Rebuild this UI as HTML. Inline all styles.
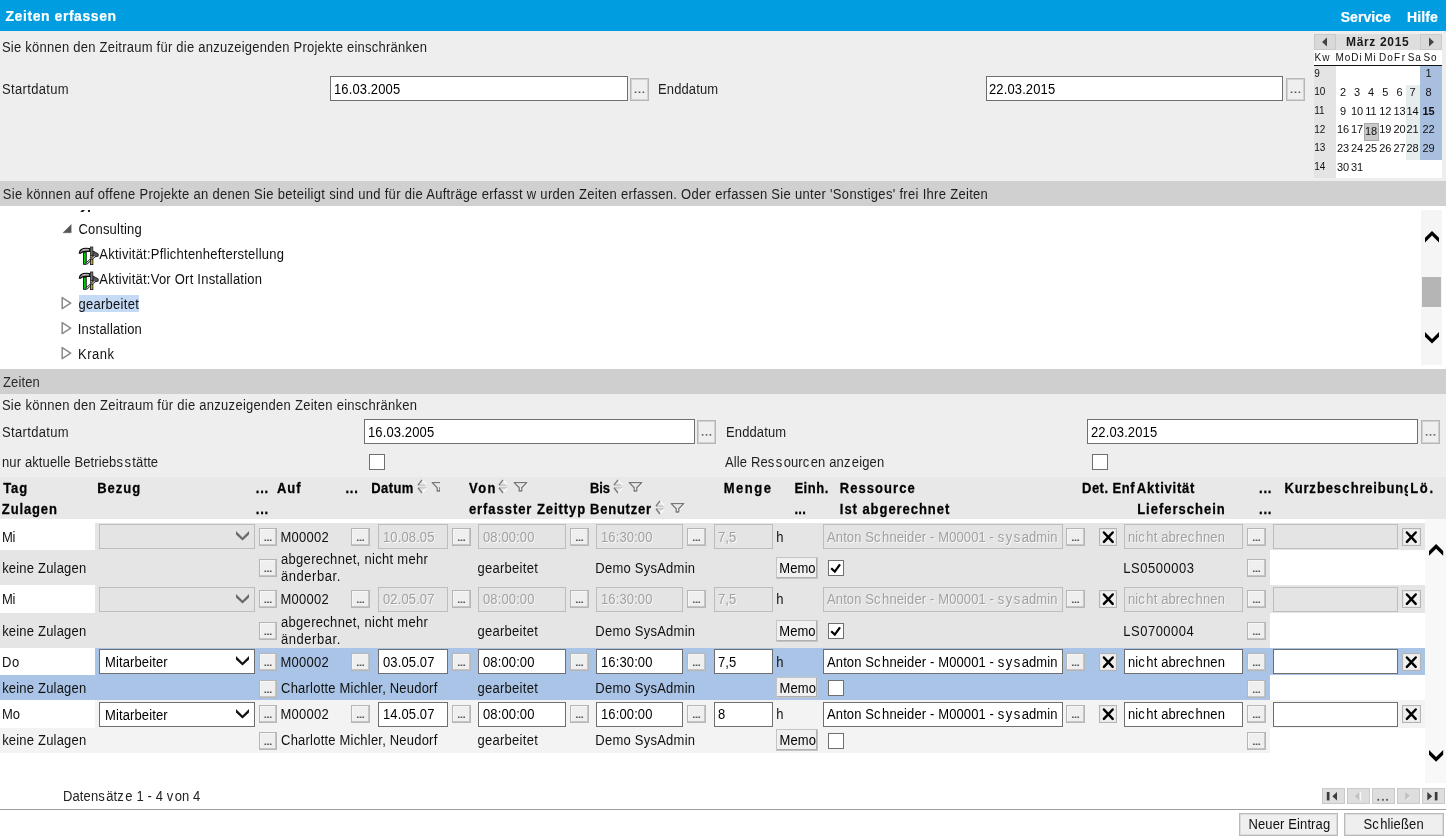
<!DOCTYPE html><html><head><meta charset="utf-8"><style>
html,body{margin:0;padding:0;}#root{position:absolute;left:0;top:0;width:1446px;height:838px;will-change:transform;}body{width:1446px;height:838px;position:relative;overflow:hidden;background:#fff;font-family:"Liberation Sans",sans-serif;}
.t{position:absolute;white-space:nowrap;}.b{position:absolute;box-sizing:border-box;}svg.b{overflow:visible;}
</style></head><body><div id="root">
<div class="b" style="left:0px;top:0px;width:1446px;height:31px;background:#009ee0;"></div>
<div class="t" style="left:5.5px;top:8.15px;font-size:14px;line-height:17px;color:#fff;font-weight:bold;letter-spacing:0.5607142857142853px;transform:scaleY(1.05);transform-origin:0 13.35px;-webkit-text-stroke:0.2px #fff;">Zeiten erfassen</div>
<div class="t" style="left:1340.7px;top:8.65px;font-size:14px;line-height:17px;color:#fff;font-weight:bold;letter-spacing:0.041666666666666664px;transform:scaleY(1.05);transform-origin:0 13.35px;-webkit-text-stroke:0.2px #fff;">Service</div>
<div class="t" style="left:1407.05px;top:8.65px;font-size:14px;line-height:17px;color:#fff;font-weight:bold;letter-spacing:0.07500000000000018px;transform:scaleY(1.05);transform-origin:0 13.35px;-webkit-text-stroke:0.2px #fff;">Hilfe</div>
<div class="b" style="left:0px;top:31px;width:1446px;height:150px;background:#eeeeee;"></div>
<div class="t" style="left:1.9px;top:40.00px;font-size:13px;line-height:16px;color:#1e1e1e;letter-spacing:0.24318181818181836px;transform:scaleY(1.08);transform-origin:0 12.50px;">Sie können den Zeitraum für die anzuzeigenden Projekte einschränken</div>
<div class="t" style="left:2.0px;top:81.50px;font-size:13px;line-height:16px;color:#1e1e1e;letter-spacing:0.3388888888888886px;transform:scaleY(1.08);transform-origin:0 12.50px;">Startdatum</div>
<div class="b" style="left:330px;top:76px;width:298px;height:25px;background:#fff;border:1px solid #6f6f6f;"></div>
<div class="t" style="left:334px;top:81.50px;font-size:13px;line-height:16px;color:#000;letter-spacing:0.12px;transform:scaleY(1.08);transform-origin:0 12.50px;">16.03.2005</div>
<div class="b" style="left:630px;top:78px;width:19px;height:23px;background:#efefef;border:1px solid #b6b6b6;box-shadow:inset 0 0 0 1px #d2d2d2;"></div>
<svg class="b" style="left:630px;top:78px;" width="19.0" height="23.0"><rect x="4.75" y="13.56" width="1.7" height="1.4" fill="#505050"/><rect x="8.65" y="13.56" width="1.7" height="1.4" fill="#505050"/><rect x="12.55" y="13.56" width="1.7" height="1.4" fill="#505050"/></svg>
<div class="t" style="left:658px;top:81.50px;font-size:13px;line-height:16px;color:#1e1e1e;letter-spacing:0.12px;transform:scaleY(1.08);transform-origin:0 12.50px;">Enddatum</div>
<div class="b" style="left:986px;top:76px;width:297px;height:25px;background:#fff;border:1px solid #6f6f6f;"></div>
<div class="t" style="left:989px;top:81.50px;font-size:13px;line-height:16px;color:#000;letter-spacing:0.12px;transform:scaleY(1.08);transform-origin:0 12.50px;">22.03.2015</div>
<div class="b" style="left:1286px;top:78px;width:19px;height:23px;background:#efefef;border:1px solid #b6b6b6;box-shadow:inset 0 0 0 1px #d2d2d2;"></div>
<svg class="b" style="left:1286px;top:78px;" width="19.0" height="23.0"><rect x="4.75" y="13.56" width="1.7" height="1.4" fill="#505050"/><rect x="8.65" y="13.56" width="1.7" height="1.4" fill="#505050"/><rect x="12.55" y="13.56" width="1.7" height="1.4" fill="#505050"/></svg>
<div class="b" style="left:1314px;top:34px;width:128px;height:16px;background:#dedede;"></div>
<div class="b" style="left:1314px;top:34px;width:22px;height:16px;background:#d9d9d9;border:1px solid #c9c9c9;"></div>
<div class="b" style="left:1420px;top:34px;width:22px;height:16px;background:#d9d9d9;border:1px solid #c9c9c9;"></div>
<svg class="b" style="left:1314px;top:34px;" width="22" height="16"><path d="M8 8 L13 3.6 L13 12.4 Z" fill="#444"/></svg>
<svg class="b" style="left:1420px;top:34px;" width="22" height="16"><path d="M14 8 L9 3.6 L9 12.4 Z" fill="#444"/></svg>
<div class="t" style="left:1346.05px;top:35.14px;font-size:12px;line-height:15px;color:#1a1a1a;font-weight:bold;letter-spacing:0.6624999999999996px;transform:scaleY(1.04);transform-origin:0 11.66px;">März 2015</div>
<div class="b" style="left:1314px;top:50px;width:128px;height:15px;background:#fff;"></div>
<div class="t" style="left:1314.6000000000001px;top:50.64px;font-size:10px;line-height:13px;color:#111;letter-spacing:0.9px;">Kw</div>
<div class="t" style="left:1335.5px;top:50.64px;font-size:10px;line-height:13px;color:#111;letter-spacing:0.9px;">Mo</div>
<div class="t" style="left:1351.3000000000002px;top:50.64px;font-size:10px;line-height:13px;color:#111;letter-spacing:0.9px;">Di</div>
<div class="t" style="left:1364.2px;top:50.64px;font-size:10px;line-height:13px;color:#111;letter-spacing:0.9px;">Mi</div>
<div class="t" style="left:1379.1000000000001px;top:50.64px;font-size:10px;line-height:13px;color:#111;letter-spacing:0.9px;">Do</div>
<div class="t" style="left:1393.9px;top:50.64px;font-size:10px;line-height:13px;color:#111;letter-spacing:0.9px;">F</div>
<div class="t" style="left:1401.7px;top:50.64px;font-size:10px;line-height:13px;color:#111;letter-spacing:0.9px;">r</div>
<div class="t" style="left:1407.8000000000002px;top:50.64px;font-size:10px;line-height:13px;color:#111;letter-spacing:0.9px;">Sa</div>
<div class="t" style="left:1423.5px;top:50.64px;font-size:10px;line-height:13px;color:#111;letter-spacing:0.9px;">So</div>
<div class="b" style="left:1314px;top:65px;width:128px;height:1px;background:#111;"></div>
<div class="b" style="left:1314px;top:66px;width:128px;height:112px;background:#fff;"></div>
<div class="b" style="left:1314px;top:66px;width:22px;height:112px;background:#e4e4e4;"></div>
<div class="b" style="left:1406px;top:85px;width:14px;height:75px;background:#e5eded;"></div>
<div class="b" style="left:1420px;top:66px;width:22px;height:94px;background:#a9bfdf;"></div>
<div class="b" style="left:1364px;top:123px;width:15px;height:18px;background:#c9c9c9;border:1px solid #a9a9a9;"></div>
<div class="t" style="left:1314.3px;top:66.63px;font-size:10px;line-height:13px;color:#111;">9</div>
<div class="t" style="left:1314.3px;top:85.03px;font-size:10px;line-height:13px;color:#111;">10</div>
<div class="t" style="left:1314.3px;top:103.83px;font-size:10px;line-height:13px;color:#111;">11</div>
<div class="t" style="left:1314.3px;top:122.64px;font-size:10px;line-height:13px;color:#111;">12</div>
<div class="t" style="left:1314.3px;top:141.44px;font-size:10px;line-height:13px;color:#111;">13</div>
<div class="t" style="left:1314.3px;top:159.84px;font-size:10px;line-height:13px;color:#111;">14</div>
<div class="t" style="left:1408.5px;top:66.30px;width:40px;text-align:center;font-size:11px;line-height:14px;color:#111;">1</div>
<div class="t" style="left:1323px;top:84.70px;width:40px;text-align:center;font-size:11px;line-height:14px;color:#111;">2</div>
<div class="t" style="left:1337px;top:84.70px;width:40px;text-align:center;font-size:11px;line-height:14px;color:#111;">3</div>
<div class="t" style="left:1351px;top:84.70px;width:40px;text-align:center;font-size:11px;line-height:14px;color:#111;">4</div>
<div class="t" style="left:1365.3px;top:84.70px;width:40px;text-align:center;font-size:11px;line-height:14px;color:#111;">5</div>
<div class="t" style="left:1379.5px;top:84.70px;width:40px;text-align:center;font-size:11px;line-height:14px;color:#111;">6</div>
<div class="t" style="left:1392.5px;top:84.70px;width:40px;text-align:center;font-size:11px;line-height:14px;color:#111;">7</div>
<div class="t" style="left:1408.5px;top:84.70px;width:40px;text-align:center;font-size:11px;line-height:14px;color:#111;">8</div>
<div class="t" style="left:1323px;top:103.50px;width:40px;text-align:center;font-size:11px;line-height:14px;color:#111;">9</div>
<div class="t" style="left:1337px;top:103.50px;width:40px;text-align:center;font-size:11px;line-height:14px;color:#111;">10</div>
<div class="t" style="left:1351px;top:103.50px;width:40px;text-align:center;font-size:11px;line-height:14px;color:#111;">11</div>
<div class="t" style="left:1365.3px;top:103.50px;width:40px;text-align:center;font-size:11px;line-height:14px;color:#111;">12</div>
<div class="t" style="left:1379.5px;top:103.50px;width:40px;text-align:center;font-size:11px;line-height:14px;color:#111;">13</div>
<div class="t" style="left:1392.5px;top:103.50px;width:40px;text-align:center;font-size:11px;line-height:14px;color:#111;">14</div>
<div class="t" style="left:1408.5px;top:103.50px;width:40px;text-align:center;font-size:11px;line-height:14px;color:#111;font-weight:bold;">15</div>
<div class="t" style="left:1323px;top:122.30px;width:40px;text-align:center;font-size:11px;line-height:14px;color:#111;">16</div>
<div class="t" style="left:1337px;top:122.30px;width:40px;text-align:center;font-size:11px;line-height:14px;color:#111;">17</div>
<div class="t" style="left:1351px;top:123.50px;width:40px;text-align:center;font-size:11px;line-height:14px;color:#111;">18</div>
<div class="t" style="left:1365.3px;top:122.30px;width:40px;text-align:center;font-size:11px;line-height:14px;color:#111;">19</div>
<div class="t" style="left:1379.5px;top:122.30px;width:40px;text-align:center;font-size:11px;line-height:14px;color:#111;">20</div>
<div class="t" style="left:1392.5px;top:122.30px;width:40px;text-align:center;font-size:11px;line-height:14px;color:#111;">21</div>
<div class="t" style="left:1408.5px;top:122.30px;width:40px;text-align:center;font-size:11px;line-height:14px;color:#111;">22</div>
<div class="t" style="left:1323px;top:141.10px;width:40px;text-align:center;font-size:11px;line-height:14px;color:#111;">23</div>
<div class="t" style="left:1337px;top:141.10px;width:40px;text-align:center;font-size:11px;line-height:14px;color:#111;">24</div>
<div class="t" style="left:1351px;top:141.10px;width:40px;text-align:center;font-size:11px;line-height:14px;color:#111;">25</div>
<div class="t" style="left:1365.3px;top:141.10px;width:40px;text-align:center;font-size:11px;line-height:14px;color:#111;">26</div>
<div class="t" style="left:1379.5px;top:141.10px;width:40px;text-align:center;font-size:11px;line-height:14px;color:#111;">27</div>
<div class="t" style="left:1392.5px;top:141.10px;width:40px;text-align:center;font-size:11px;line-height:14px;color:#111;">28</div>
<div class="t" style="left:1408.5px;top:141.10px;width:40px;text-align:center;font-size:11px;line-height:14px;color:#111;">29</div>
<div class="t" style="left:1323px;top:159.50px;width:40px;text-align:center;font-size:11px;line-height:14px;color:#111;">30</div>
<div class="t" style="left:1337px;top:159.50px;width:40px;text-align:center;font-size:11px;line-height:14px;color:#111;">31</div>
<div class="b" style="left:0px;top:181px;width:1446px;height:25px;background:#d0d0d0;"></div>
<div class="t" style="left:2.8px;top:186.50px;font-size:13px;line-height:16px;color:#1e1e1e;letter-spacing:0.30640243902439024px;transform:scaleY(1.08);transform-origin:0 12.50px;">Sie können auf offene Projekte an denen Sie beteiligt sind und für die Aufträge erfasst w urden Zeiten erfassen. Oder erfassen Sie unter &#x27;Sonstiges&#x27; frei Ihre Zeiten</div>
<div class="b" style="left:0px;top:206px;width:1446px;height:163px;background:#fff;"></div>
<div class="b" style="left:80.5px;top:209.6px;width:3px;height:2.2px;background:#222;transform:skewX(-40deg);"></div>
<div class="b" style="left:87.8px;top:209.8px;width:1.8px;height:2.2px;background:#222;"></div>
<svg class="b" style="left:62px;top:224px;" width="10" height="10"><path d="M1.0 8.8 L9.2 8.8 L9.2 0.5 Z" fill="#555" stroke="#555" stroke-width="0.4"/></svg>
<div class="t" style="left:78.4px;top:221.50px;font-size:13px;line-height:16px;color:#111;letter-spacing:0.21666666666666698px;transform:scaleY(1.08);transform-origin:0 12.50px;">Consulting</div>
<svg class="b" style="left:77.8px;top:246px;" width="22" height="20" viewBox="0 0 22 20"><path d="M1.3 7.0 C1.8 4.0 4.6 2.4 8.2 2.4 L11.8 2.6 L11.8 5.4 L8.4 5.3 C5.8 5.3 3.6 5.8 2.1 7.4 Z" fill="#9a9a9a" stroke="#0a0a0a" stroke-width="1.2" stroke-linejoin="round"/><path d="M4.4 4.0 C6 3.3 8.2 3.2 10.6 3.4" stroke="#d8d8d8" stroke-width="0.8" fill="none"/><rect x="5.6" y="6.2" width="2.6" height="12.1" fill="#00e000" stroke="#1a1020" stroke-width="1.0"/><path d="M15.0 5.0 L20.2 7.8 L20.2 10.2 L15.2 11.0 Z" fill="#5a5a5a" stroke="#111" stroke-width="0.8" stroke-linejoin="round"/><rect x="12.4" y="1.0" width="2.4" height="8.6" fill="#707070" stroke="#222" stroke-width="0.8"/><rect x="12.4" y="9.6" width="2.4" height="2.2" fill="#a8a800" stroke="#222" stroke-width="0.6"/><path d="M8.4 17.6 L17.2 9.6" stroke="#303040" stroke-width="2.4"/><path d="M8.7 17.3 L16.9 9.9" stroke="#e8e8f4" stroke-width="1.0"/><rect x="12.5" y="13.2" width="2.4" height="5.4" fill="#b8b800" stroke="#111" stroke-width="0.8"/></svg>
<div class="t" style="left:99.3px;top:246.50px;font-size:13px;line-height:16px;color:#111;letter-spacing:0.23906250000000018px;transform:scaleY(1.08);transform-origin:0 12.50px;">Aktivität:Pflichtenhefterstellung</div>
<svg class="b" style="left:77.8px;top:271px;" width="22" height="20" viewBox="0 0 22 20"><path d="M1.3 7.0 C1.8 4.0 4.6 2.4 8.2 2.4 L11.8 2.6 L11.8 5.4 L8.4 5.3 C5.8 5.3 3.6 5.8 2.1 7.4 Z" fill="#9a9a9a" stroke="#0a0a0a" stroke-width="1.2" stroke-linejoin="round"/><path d="M4.4 4.0 C6 3.3 8.2 3.2 10.6 3.4" stroke="#d8d8d8" stroke-width="0.8" fill="none"/><rect x="5.6" y="6.2" width="2.6" height="12.1" fill="#00e000" stroke="#1a1020" stroke-width="1.0"/><path d="M15.0 5.0 L20.2 7.8 L20.2 10.2 L15.2 11.0 Z" fill="#5a5a5a" stroke="#111" stroke-width="0.8" stroke-linejoin="round"/><rect x="12.4" y="1.0" width="2.4" height="8.6" fill="#707070" stroke="#222" stroke-width="0.8"/><rect x="12.4" y="9.6" width="2.4" height="2.2" fill="#a8a800" stroke="#222" stroke-width="0.6"/><path d="M8.4 17.6 L17.2 9.6" stroke="#303040" stroke-width="2.4"/><path d="M8.7 17.3 L16.9 9.9" stroke="#e8e8f4" stroke-width="1.0"/><rect x="12.5" y="13.2" width="2.4" height="5.4" fill="#b8b800" stroke="#111" stroke-width="0.8"/></svg>
<div class="t" style="left:99.3px;top:271.50px;font-size:13px;line-height:16px;color:#111;letter-spacing:0.22931034482758642px;transform:scaleY(1.08);transform-origin:0 12.50px;">Aktivität:Vor Ort Installation</div>
<svg class="b" style="left:61px;top:297.3px;" width="11" height="13"><path d="M1.2 0.6 L9.7 6.2 L1.2 11.7 Z" fill="none" stroke="#8a8a8a" stroke-width="1.5" stroke-linejoin="round"/></svg>
<div class="b" style="left:79px;top:295px;width:60px;height:17px;background:#c5daf5;"></div>
<div class="t" style="left:78.5px;top:296.50px;font-size:13px;line-height:16px;color:#111;letter-spacing:0.27222222222222253px;transform:scaleY(1.08);transform-origin:0 12.50px;">gearbeitet</div>
<svg class="b" style="left:61px;top:322.3px;" width="11" height="13"><path d="M1.2 0.6 L9.7 6.2 L1.2 11.7 Z" fill="none" stroke="#8a8a8a" stroke-width="1.5" stroke-linejoin="round"/></svg>
<div class="t" style="left:77.75px;top:321.50px;font-size:13px;line-height:16px;color:#111;letter-spacing:0.17727272727272753px;transform:scaleY(1.08);transform-origin:0 12.50px;">Installation</div>
<svg class="b" style="left:61px;top:347.3px;" width="11" height="13"><path d="M1.2 0.6 L9.7 6.2 L1.2 11.7 Z" fill="none" stroke="#8a8a8a" stroke-width="1.5" stroke-linejoin="round"/></svg>
<div class="t" style="left:78.0px;top:346.50px;font-size:13px;line-height:16px;color:#111;letter-spacing:0.5px;transform:scaleY(1.08);transform-origin:0 12.50px;">Krank</div>
<div class="b" style="left:1421px;top:210px;width:21px;height:155px;background:#f5f5f5;"></div>
<div class="b" style="left:1422px;top:277px;width:19px;height:30px;background:#b5b5b5;"></div>
<svg class="b" style="left:1425px;top:231px;" width="15.0" height="12.5"><path d="M0 11.50 L7.00 4.50 L14.00 11.50 L14.00 6.80 L7.00 0 L0 6.80 Z" fill="#000"/></svg>
<svg class="b" style="left:1425px;top:332px;" width="15.0" height="12.5"><path d="M0 0 L7.00 7.00 L14.00 0 L14.00 4.70 L7.00 11.50 L0 4.70 Z" fill="#000"/></svg>
<div class="b" style="left:0px;top:369px;width:1446px;height:25px;background:#cfcfcf;"></div>
<div class="t" style="left:3px;top:374.50px;font-size:13px;line-height:16px;color:#2a2a2a;letter-spacing:0.12px;transform:scaleY(1.08);transform-origin:0 12.50px;">Zeiten</div>
<div class="b" style="left:0px;top:394px;width:1446px;height:83px;background:#eeeeee;"></div>
<div class="t" style="left:1.9px;top:397.50px;font-size:13px;line-height:16px;color:#1e1e1e;letter-spacing:0.27578124999999964px;transform:scaleY(1.08);transform-origin:0 12.50px;">Sie können den Zeitraum für die anzuzeigenden Zeiten einschränken</div>
<div class="t" style="left:2.0px;top:424.50px;font-size:13px;line-height:16px;color:#1e1e1e;letter-spacing:0.3388888888888886px;transform:scaleY(1.08);transform-origin:0 12.50px;">Startdatum</div>
<div class="b" style="left:364px;top:419px;width:331px;height:25px;background:#fff;border:1px solid #6f6f6f;"></div>
<div class="t" style="left:368px;top:424.50px;font-size:13px;line-height:16px;color:#000;letter-spacing:0.12px;transform:scaleY(1.08);transform-origin:0 12.50px;">16.03.2005</div>
<div class="b" style="left:697px;top:420px;width:19px;height:24px;background:#efefef;border:1px solid #b6b6b6;box-shadow:inset 0 0 0 1px #d2d2d2;"></div>
<svg class="b" style="left:697px;top:420px;" width="19.0" height="24.0"><rect x="4.75" y="14.18" width="1.7" height="1.4" fill="#505050"/><rect x="8.65" y="14.18" width="1.7" height="1.4" fill="#505050"/><rect x="12.55" y="14.18" width="1.7" height="1.4" fill="#505050"/></svg>
<div class="t" style="left:726px;top:424.50px;font-size:13px;line-height:16px;color:#1e1e1e;letter-spacing:0.12px;transform:scaleY(1.08);transform-origin:0 12.50px;">Enddatum</div>
<div class="b" style="left:1087px;top:419px;width:331px;height:25px;background:#fff;border:1px solid #6f6f6f;"></div>
<div class="t" style="left:1091px;top:424.50px;font-size:13px;line-height:16px;color:#000;letter-spacing:0.12px;transform:scaleY(1.08);transform-origin:0 12.50px;">22.03.2015</div>
<div class="b" style="left:1421px;top:420px;width:19px;height:24px;background:#efefef;border:1px solid #b6b6b6;box-shadow:inset 0 0 0 1px #d2d2d2;"></div>
<svg class="b" style="left:1421px;top:420px;" width="19.0" height="24.0"><rect x="4.75" y="14.18" width="1.7" height="1.4" fill="#505050"/><rect x="8.65" y="14.18" width="1.7" height="1.4" fill="#505050"/><rect x="12.55" y="14.18" width="1.7" height="1.4" fill="#505050"/></svg>
<div class="t" style="left:2px;top:454.50px;font-size:13px;line-height:16px;color:#1e1e1e;letter-spacing:0.12px;transform:scaleY(1.08);transform-origin:0 12.50px;">nur aktuelle Betrieb<span style="letter-spacing:1.45px">s</span><span style="letter-spacing:1.45px">s</span>tätte</div>
<div class="b" style="left:369px;top:454px;width:16px;height:16px;background:#fff;border:1px solid #6f6f6f;"></div>
<div class="t" style="left:725px;top:454.50px;font-size:13px;line-height:16px;color:#1e1e1e;letter-spacing:0.12px;transform:scaleY(1.08);transform-origin:0 12.50px;">Alle Re<span style="letter-spacing:1.45px">s</span><span style="letter-spacing:1.45px">s</span>our<span style="letter-spacing:1.45px">c</span>en an<span style="letter-spacing:1.45px">z</span>eigen</div>
<div class="b" style="left:1092px;top:454px;width:16px;height:16px;background:#fff;border:1px solid #6f6f6f;"></div>
<div class="b" style="left:0px;top:477px;width:1446px;height:42px;background:#e8e8e8;"></div>
<div class="t" style="left:3.3px;top:480.50px;font-size:13px;line-height:16px;color:#000;font-weight:bold;letter-spacing:0.8499999999999996px;transform:scaleY(1.08);transform-origin:0 12.50px;-webkit-text-stroke:0.25px #000;">Tag</div>
<div class="t" style="left:97.15px;top:480.50px;font-size:13px;line-height:16px;color:#000;font-weight:bold;letter-spacing:1.0px;transform:scaleY(1.08);transform-origin:0 12.50px;-webkit-text-stroke:0.25px #000;">Bezug</div>
<div class="t" style="left:255.85000000000002px;top:480.50px;font-size:13px;line-height:16px;color:#000;font-weight:bold;letter-spacing:0.7750000000000004px;transform:scaleY(1.08);transform-origin:0 12.50px;-webkit-text-stroke:0.25px #000;">...</div>
<div class="t" style="left:277.05px;top:480.50px;font-size:13px;line-height:16px;color:#000;font-weight:bold;letter-spacing:0.9000000000000004px;transform:scaleY(1.08);transform-origin:0 12.50px;-webkit-text-stroke:0.25px #000;">Auf</div>
<div class="t" style="left:345.45px;top:480.50px;font-size:13px;line-height:16px;color:#000;font-weight:bold;letter-spacing:0.7750000000000004px;transform:scaleY(1.08);transform-origin:0 12.50px;-webkit-text-stroke:0.25px #000;">...</div>
<div class="t" style="left:371.25px;top:480.50px;font-size:13px;line-height:16px;color:#000;font-weight:bold;letter-spacing:0.40000000000000036px;transform:scaleY(1.08);transform-origin:0 12.50px;-webkit-text-stroke:0.25px #000;">Datum</div>
<div class="t" style="left:469.1px;top:480.50px;font-size:13px;line-height:16px;color:#000;font-weight:bold;letter-spacing:1.4000000000000004px;transform:scaleY(1.08);transform-origin:0 12.50px;-webkit-text-stroke:0.25px #000;">Von</div>
<div class="t" style="left:590.05px;top:480.50px;font-size:13px;line-height:16px;color:#000;font-weight:bold;letter-spacing:-0.1999999999999993px;transform:scaleY(1.08);transform-origin:0 12.50px;-webkit-text-stroke:0.25px #000;">Bis</div>
<div class="t" style="left:723.75px;top:480.50px;font-size:13px;line-height:16px;color:#000;font-weight:bold;letter-spacing:1.5px;transform:scaleY(1.08);transform-origin:0 12.50px;-webkit-text-stroke:0.25px #000;">Menge</div>
<div class="t" style="left:794.45px;top:480.50px;font-size:13px;line-height:16px;color:#000;font-weight:bold;letter-spacing:0.5124999999999993px;transform:scaleY(1.08);transform-origin:0 12.50px;-webkit-text-stroke:0.25px #000;">Einh.</div>
<div class="t" style="left:839.85px;top:480.50px;font-size:13px;line-height:16px;color:#000;font-weight:bold;letter-spacing:1.0437499999999993px;transform:scaleY(1.08);transform-origin:0 12.50px;-webkit-text-stroke:0.25px #000;">Ressource</div>
<div class="t" style="left:1082.05px;top:480.50px;font-size:13px;line-height:16px;color:#000;font-weight:bold;letter-spacing:0.47142857142857103px;transform:scaleY(1.08);transform-origin:0 12.50px;-webkit-text-stroke:0.25px #000;">Det. Enf</div>
<div class="t" style="left:1136.85px;top:480.50px;font-size:13px;line-height:16px;color:#000;font-weight:bold;letter-spacing:0.7874999999999996px;transform:scaleY(1.08);transform-origin:0 12.50px;-webkit-text-stroke:0.25px #000;">Aktivität</div>
<div class="t" style="left:1259.05px;top:480.50px;font-size:13px;line-height:16px;color:#000;font-weight:bold;letter-spacing:0.7750000000000004px;transform:scaleY(1.08);transform-origin:0 12.50px;-webkit-text-stroke:0.25px #000;">...</div>
<div class="t" style="left:1410.25px;top:480.50px;font-size:13px;line-height:16px;color:#000;font-weight:bold;letter-spacing:1.6500000000000004px;transform:scaleY(1.08);transform-origin:0 12.50px;-webkit-text-stroke:0.25px #000;">Lö.</div>
<div class="t" style="left:1284.5px;top:480.50px;font-size:13px;line-height:16px;color:#000;font-weight:bold;letter-spacing:0.8px;width:123px;overflow:hidden;transform:scaleY(1.08);transform-origin:0 12.50px;-webkit-text-stroke:0.25px #000;">Kur<span style="letter-spacing:1.20px">z</span>be<span style="letter-spacing:1.20px">s</span><span style="letter-spacing:1.20px">c</span>hreibung</div>
<div class="t" style="left:1.85px;top:501.50px;font-size:13px;line-height:16px;color:#000;font-weight:bold;letter-spacing:0.8666666666666671px;transform:scaleY(1.08);transform-origin:0 12.50px;-webkit-text-stroke:0.25px #000;">Zulagen</div>
<div class="t" style="left:255.85000000000002px;top:501.50px;font-size:13px;line-height:16px;color:#000;font-weight:bold;letter-spacing:0.7750000000000004px;transform:scaleY(1.08);transform-origin:0 12.50px;-webkit-text-stroke:0.25px #000;">...</div>
<div class="t" style="left:468.9px;top:501.50px;font-size:13px;line-height:16px;color:#000;font-weight:bold;letter-spacing:0.9468750000000004px;transform:scaleY(1.08);transform-origin:0 12.50px;-webkit-text-stroke:0.25px #000;">erfasster Zeittyp</div>
<div class="t" style="left:590.05px;top:501.50px;font-size:13px;line-height:16px;color:#000;font-weight:bold;letter-spacing:0.7642857142857145px;transform:scaleY(1.08);transform-origin:0 12.50px;-webkit-text-stroke:0.25px #000;">Benutzer</div>
<div class="t" style="left:794.45px;top:501.50px;font-size:13px;line-height:16px;color:#000;font-weight:bold;letter-spacing:0.3250000000000002px;transform:scaleY(1.08);transform-origin:0 12.50px;-webkit-text-stroke:0.25px #000;">...</div>
<div class="t" style="left:839.85px;top:501.50px;font-size:13px;line-height:16px;color:#000;font-weight:bold;letter-spacing:0.9535714285714282px;transform:scaleY(1.08);transform-origin:0 12.50px;-webkit-text-stroke:0.25px #000;">Ist abgerechnet</div>
<div class="t" style="left:1137.15px;top:501.50px;font-size:13px;line-height:16px;color:#000;font-weight:bold;letter-spacing:1.0045454545454542px;transform:scaleY(1.08);transform-origin:0 12.50px;-webkit-text-stroke:0.25px #000;">Lieferschein</div>
<div class="t" style="left:1259.05px;top:501.50px;font-size:13px;line-height:16px;color:#000;font-weight:bold;letter-spacing:0.7750000000000004px;transform:scaleY(1.08);transform-origin:0 12.50px;-webkit-text-stroke:0.25px #000;">...</div>
<svg class="b" style="left:416.5px;top:479px;" width="11" height="15" viewBox="0 0 11 15"><path d="M5 0.6 L0.8 6.3 L9.6 6.3 Z" fill="#e9e9e9"/><path d="M1.2 6.1 L9.4 6.1" stroke="#c2c2c2" stroke-width="1.3"/><path d="M5.2 0.8 L9.4 6.1" stroke="#fdfdfd" stroke-width="1.2"/><path d="M5 0.8 L1 6.2" stroke="#7a7a7a" stroke-width="1.4"/><path d="M0.8 8.6 L9.6 8.6 L5 14.2 Z" fill="#e9e9e9"/><path d="M1.2 8.9 L9.4 8.9" stroke="#bdbdbd" stroke-width="1.2"/><path d="M9.4 8.9 L5.2 14" stroke="#fdfdfd" stroke-width="1.2"/><path d="M1 8.8 L5 14" stroke="#7a7a7a" stroke-width="1.4"/></svg>
<svg class="b" style="left:431px;top:481px;overflow:hidden;" width="8.8" height="12" viewBox="0 0 8.8 12"><path d="M1.2 1.6 L13.8 1.6 L8.8 6.8 L8.8 10 L6.2 10 L6.2 6.8 Z" fill="none" stroke="#fafafa" stroke-width="1.2" transform="translate(0.7,0.7)"/><path d="M1.2 1.6 L13.8 1.6 L8.8 6.8 L8.8 10 L6.2 10 L6.2 6.8 Z" fill="none" stroke="#777" stroke-width="1.3" stroke-linejoin="round"/></svg>
<svg class="b" style="left:498px;top:479px;" width="11" height="15" viewBox="0 0 11 15"><path d="M5 0.6 L0.8 6.3 L9.6 6.3 Z" fill="#e9e9e9"/><path d="M1.2 6.1 L9.4 6.1" stroke="#c2c2c2" stroke-width="1.3"/><path d="M5.2 0.8 L9.4 6.1" stroke="#fdfdfd" stroke-width="1.2"/><path d="M5 0.8 L1 6.2" stroke="#7a7a7a" stroke-width="1.4"/><path d="M0.8 8.6 L9.6 8.6 L5 14.2 Z" fill="#e9e9e9"/><path d="M1.2 8.9 L9.4 8.9" stroke="#bdbdbd" stroke-width="1.2"/><path d="M9.4 8.9 L5.2 14" stroke="#fdfdfd" stroke-width="1.2"/><path d="M1 8.8 L5 14" stroke="#7a7a7a" stroke-width="1.4"/></svg>
<svg class="b" style="left:513px;top:481px;overflow:hidden;" width="15" height="12" viewBox="0 0 15 12"><path d="M1.2 1.6 L13.8 1.6 L8.8 6.8 L8.8 10 L6.2 10 L6.2 6.8 Z" fill="none" stroke="#fafafa" stroke-width="1.2" transform="translate(0.7,0.7)"/><path d="M1.2 1.6 L13.8 1.6 L8.8 6.8 L8.8 10 L6.2 10 L6.2 6.8 Z" fill="none" stroke="#777" stroke-width="1.3" stroke-linejoin="round"/></svg>
<svg class="b" style="left:613px;top:479px;" width="11" height="15" viewBox="0 0 11 15"><path d="M5 0.6 L0.8 6.3 L9.6 6.3 Z" fill="#e9e9e9"/><path d="M1.2 6.1 L9.4 6.1" stroke="#c2c2c2" stroke-width="1.3"/><path d="M5.2 0.8 L9.4 6.1" stroke="#fdfdfd" stroke-width="1.2"/><path d="M5 0.8 L1 6.2" stroke="#7a7a7a" stroke-width="1.4"/><path d="M0.8 8.6 L9.6 8.6 L5 14.2 Z" fill="#e9e9e9"/><path d="M1.2 8.9 L9.4 8.9" stroke="#bdbdbd" stroke-width="1.2"/><path d="M9.4 8.9 L5.2 14" stroke="#fdfdfd" stroke-width="1.2"/><path d="M1 8.8 L5 14" stroke="#7a7a7a" stroke-width="1.4"/></svg>
<svg class="b" style="left:628px;top:481px;overflow:hidden;" width="15" height="12" viewBox="0 0 15 12"><path d="M1.2 1.6 L13.8 1.6 L8.8 6.8 L8.8 10 L6.2 10 L6.2 6.8 Z" fill="none" stroke="#fafafa" stroke-width="1.2" transform="translate(0.7,0.7)"/><path d="M1.2 1.6 L13.8 1.6 L8.8 6.8 L8.8 10 L6.2 10 L6.2 6.8 Z" fill="none" stroke="#777" stroke-width="1.3" stroke-linejoin="round"/></svg>
<svg class="b" style="left:655px;top:500px;" width="11" height="15" viewBox="0 0 11 15"><path d="M5 0.6 L0.8 6.3 L9.6 6.3 Z" fill="#e9e9e9"/><path d="M1.2 6.1 L9.4 6.1" stroke="#c2c2c2" stroke-width="1.3"/><path d="M5.2 0.8 L9.4 6.1" stroke="#fdfdfd" stroke-width="1.2"/><path d="M5 0.8 L1 6.2" stroke="#7a7a7a" stroke-width="1.4"/><path d="M0.8 8.6 L9.6 8.6 L5 14.2 Z" fill="#e9e9e9"/><path d="M1.2 8.9 L9.4 8.9" stroke="#bdbdbd" stroke-width="1.2"/><path d="M9.4 8.9 L5.2 14" stroke="#fdfdfd" stroke-width="1.2"/><path d="M1 8.8 L5 14" stroke="#7a7a7a" stroke-width="1.4"/></svg>
<svg class="b" style="left:670px;top:502px;overflow:hidden;" width="15" height="12" viewBox="0 0 15 12"><path d="M1.2 1.6 L13.8 1.6 L8.8 6.8 L8.8 10 L6.2 10 L6.2 6.8 Z" fill="none" stroke="#fafafa" stroke-width="1.2" transform="translate(0.7,0.7)"/><path d="M1.2 1.6 L13.8 1.6 L8.8 6.8 L8.8 10 L6.2 10 L6.2 6.8 Z" fill="none" stroke="#777" stroke-width="1.3" stroke-linejoin="round"/></svg>
<div class="b" style="left:1425px;top:519px;width:21px;height:264px;background:#f8f8f8;"></div>
<svg class="b" style="left:1428.7px;top:544px;" width="15.2" height="12.8"><path d="M0 11.80 L7.10 4.70 L14.20 11.80 L14.20 7.10 L7.10 0 L0 7.10 Z" fill="#000"/></svg>
<svg class="b" style="left:1428.6px;top:750.2px;" width="15.2" height="12.8"><path d="M0 0 L7.10 7.10 L14.20 0 L14.20 4.70 L7.10 11.80 L0 4.70 Z" fill="#000"/></svg>
<div class="b" style="left:95px;top:523px;width:1330px;height:27px;background:#e5e5e5;"></div>
<div class="b" style="left:0px;top:550px;width:1270px;height:35px;background:#e5e5e5;"></div>
<div class="t" style="left:1.9px;top:529.50px;font-size:13px;line-height:16px;color:#111;letter-spacing:-0.15000000000000036px;transform:scaleY(1.08);transform-origin:0 12.50px;">Mi</div>
<div class="b" style="left:99px;top:524px;width:156px;height:24.5px;background:#e4e4e4;border:1px solid #bdbdbd;"></div>
<svg class="b" style="left:236.2px;top:531px;" width="14.0" height="10.4"><path d="M0 0 L6.50 6.50 L13.00 0 L13.00 3.40 L6.50 9.40 L0 3.40 Z" fill="#6a6a6a"/></svg>
<div class="b" style="left:259px;top:528px;width:18px;height:18px;background:#efefef;border:1px solid #b6b6b6;box-shadow:inset -1px -1px 0 #c6c6c6, inset 1px 1px 0 #f6f6f6;"></div>
<svg class="b" style="left:259px;top:528px;" width="18.0" height="18.0"><rect x="5.45" y="11.54" width="1.7" height="1.4" fill="#505050"/><rect x="8.15" y="11.54" width="1.7" height="1.4" fill="#505050"/><rect x="10.85" y="11.54" width="1.7" height="1.4" fill="#505050"/></svg>
<div class="t" style="left:280.5px;top:529.50px;font-size:13px;line-height:16px;color:#111;letter-spacing:0.25999999999999945px;transform:scaleY(1.08);transform-origin:0 12.50px;">M00002</div>
<div class="b" style="left:351px;top:528px;width:19px;height:18px;background:#efefef;border:1px solid #b6b6b6;box-shadow:inset -1px -1px 0 #c6c6c6, inset 1px 1px 0 #f6f6f6;"></div>
<svg class="b" style="left:351px;top:528px;" width="19.0" height="18.0"><rect x="5.95" y="11.54" width="1.7" height="1.4" fill="#505050"/><rect x="8.65" y="11.54" width="1.7" height="1.4" fill="#505050"/><rect x="11.35" y="11.54" width="1.7" height="1.4" fill="#505050"/></svg>
<div class="b" style="left:378px;top:524px;width:70px;height:24.5px;background:#e4e4e4;border:1px solid #bdbdbd;"></div>
<div class="t" style="left:383px;top:529.50px;font-size:13px;line-height:16px;color:#a0a0a0;letter-spacing:0.12px;transform:scaleY(1.08);transform-origin:0 12.50px;text-shadow:0.8px 0.8px 0 #fbfbfb;">10.08.05</div>
<div class="b" style="left:452px;top:528px;width:19px;height:18px;background:#efefef;border:1px solid #b6b6b6;box-shadow:inset -1px -1px 0 #c6c6c6, inset 1px 1px 0 #f6f6f6;"></div>
<svg class="b" style="left:452px;top:528px;" width="19.0" height="18.0"><rect x="5.95" y="11.54" width="1.7" height="1.4" fill="#505050"/><rect x="8.65" y="11.54" width="1.7" height="1.4" fill="#505050"/><rect x="11.35" y="11.54" width="1.7" height="1.4" fill="#505050"/></svg>
<div class="b" style="left:478px;top:524px;width:88px;height:24.5px;background:#e4e4e4;border:1px solid #bdbdbd;"></div>
<div class="t" style="left:483px;top:529.50px;font-size:13px;line-height:16px;color:#a0a0a0;letter-spacing:0.12px;transform:scaleY(1.08);transform-origin:0 12.50px;text-shadow:0.8px 0.8px 0 #fbfbfb;">08:00:00</div>
<div class="b" style="left:570px;top:528px;width:19px;height:18px;background:#efefef;border:1px solid #b6b6b6;box-shadow:inset -1px -1px 0 #c6c6c6, inset 1px 1px 0 #f6f6f6;"></div>
<svg class="b" style="left:570px;top:528px;" width="19.0" height="18.0"><rect x="5.95" y="11.54" width="1.7" height="1.4" fill="#505050"/><rect x="8.65" y="11.54" width="1.7" height="1.4" fill="#505050"/><rect x="11.35" y="11.54" width="1.7" height="1.4" fill="#505050"/></svg>
<div class="b" style="left:596px;top:524px;width:87px;height:24.5px;background:#e4e4e4;border:1px solid #bdbdbd;"></div>
<div class="t" style="left:601px;top:529.50px;font-size:13px;line-height:16px;color:#a0a0a0;letter-spacing:0.12px;transform:scaleY(1.08);transform-origin:0 12.50px;text-shadow:0.8px 0.8px 0 #fbfbfb;">16:30:00</div>
<div class="b" style="left:687px;top:528px;width:19px;height:18px;background:#efefef;border:1px solid #b6b6b6;box-shadow:inset -1px -1px 0 #c6c6c6, inset 1px 1px 0 #f6f6f6;"></div>
<svg class="b" style="left:687px;top:528px;" width="19.0" height="18.0"><rect x="5.95" y="11.54" width="1.7" height="1.4" fill="#505050"/><rect x="8.65" y="11.54" width="1.7" height="1.4" fill="#505050"/><rect x="11.35" y="11.54" width="1.7" height="1.4" fill="#505050"/></svg>
<div class="b" style="left:714px;top:524px;width:59px;height:24.5px;background:#e4e4e4;border:1px solid #bdbdbd;"></div>
<div class="t" style="left:718px;top:529.50px;font-size:13px;line-height:16px;color:#a0a0a0;letter-spacing:0.12px;transform:scaleY(1.08);transform-origin:0 12.50px;text-shadow:0.8px 0.8px 0 #fbfbfb;">7,5</div>
<div class="t" style="left:776.2px;top:529.50px;font-size:13px;line-height:16px;color:#111;letter-spacing:0.12px;transform:scaleY(1.08);transform-origin:0 12.50px;">h</div>
<div class="b" style="left:823px;top:524px;width:240px;height:24.5px;background:#e4e4e4;border:1px solid #bdbdbd;"></div>
<div class="t" style="left:827px;top:529.50px;font-size:13px;line-height:16px;color:#a0a0a0;letter-spacing:0.12px;transform:scaleY(1.08);transform-origin:0 12.50px;text-shadow:0.8px 0.8px 0 #fbfbfb;">Anton S<span style="letter-spacing:1.45px">c</span>hneider - M00001 - <span style="letter-spacing:1.45px">s</span><span style="letter-spacing:1.45px">y</span><span style="letter-spacing:1.45px">s</span>admin</div>
<div class="b" style="left:1066px;top:528px;width:19px;height:18px;background:#efefef;border:1px solid #b6b6b6;box-shadow:inset -1px -1px 0 #c6c6c6, inset 1px 1px 0 #f6f6f6;"></div>
<svg class="b" style="left:1066px;top:528px;" width="19.0" height="18.0"><rect x="5.95" y="11.54" width="1.7" height="1.4" fill="#505050"/><rect x="8.65" y="11.54" width="1.7" height="1.4" fill="#505050"/><rect x="11.35" y="11.54" width="1.7" height="1.4" fill="#505050"/></svg>
<div class="b" style="left:1099px;top:527.5px;width:18px;height:18.5px;background:#f0f0f0;border:1px solid #b4b4b4;box-shadow:inset 0 0 0 1px #e8e8e8;"></div>
<svg class="b" style="left:1099px;top:527.5px;" width="18" height="18.5" viewBox="0 0 18 18.5"><path d="M4.9 4.5 L13.7 13.8 M13.7 4.5 L4.9 13.8" stroke="#000" stroke-width="2.5" stroke-linecap="round"/></svg>
<div class="b" style="left:1124px;top:524px;width:119px;height:24.5px;background:#e4e4e4;border:1px solid #bdbdbd;"></div>
<div class="t" style="left:1128px;top:529.50px;font-size:13px;line-height:16px;color:#a0a0a0;letter-spacing:0.12px;transform:scaleY(1.08);transform-origin:0 12.50px;text-shadow:0.8px 0.8px 0 #fbfbfb;">ni<span style="letter-spacing:1.45px">c</span>ht abre<span style="letter-spacing:1.45px">c</span>hnen</div>
<div class="b" style="left:1247px;top:528px;width:19px;height:18px;background:#efefef;border:1px solid #b6b6b6;box-shadow:inset -1px -1px 0 #c6c6c6, inset 1px 1px 0 #f6f6f6;"></div>
<svg class="b" style="left:1247px;top:528px;" width="19.0" height="18.0"><rect x="5.95" y="11.54" width="1.7" height="1.4" fill="#505050"/><rect x="8.65" y="11.54" width="1.7" height="1.4" fill="#505050"/><rect x="11.35" y="11.54" width="1.7" height="1.4" fill="#505050"/></svg>
<div class="b" style="left:1273px;top:524px;width:125px;height:24.5px;background:#e4e4e4;border:1px solid #bdbdbd;"></div>
<div class="b" style="left:1402px;top:527.5px;width:19px;height:18.5px;background:#f0f0f0;border:1px solid #b4b4b4;box-shadow:inset 0 0 0 1px #e8e8e8;"></div>
<svg class="b" style="left:1402px;top:527.5px;" width="19" height="18.5" viewBox="0 0 19 18.5"><path d="M4.9 4.5 L13.7 13.8 M13.7 4.5 L4.9 13.8" stroke="#000" stroke-width="2.5" stroke-linecap="round"/></svg>
<div class="t" style="left:2.15px;top:561.00px;font-size:13px;line-height:16px;color:#111;letter-spacing:0.19583333333333286px;transform:scaleY(1.08);transform-origin:0 12.50px;">keine Zulagen</div>
<div class="b" style="left:259px;top:559px;width:18px;height:18px;background:#efefef;border:1px solid #b6b6b6;box-shadow:inset -1px -1px 0 #c6c6c6, inset 1px 1px 0 #f6f6f6;"></div>
<svg class="b" style="left:259px;top:559px;" width="18.0" height="18.0"><rect x="5.45" y="11.54" width="1.7" height="1.4" fill="#505050"/><rect x="8.15" y="11.54" width="1.7" height="1.4" fill="#505050"/><rect x="10.85" y="11.54" width="1.7" height="1.4" fill="#505050"/></svg>
<div class="t" style="left:281.0px;top:551.50px;font-size:13px;line-height:16px;color:#111;letter-spacing:0.3022727272727275px;transform:scaleY(1.08);transform-origin:0 12.50px;">abgerechnet, nicht mehr</div>
<div class="t" style="left:281.0px;top:568.80px;font-size:13px;line-height:16px;color:#111;letter-spacing:0.5437500000000002px;transform:scaleY(1.08);transform-origin:0 12.50px;">änderbar.</div>
<div class="t" style="left:477.5px;top:561.00px;font-size:13px;line-height:16px;color:#111;letter-spacing:0.27222222222222253px;transform:scaleY(1.08);transform-origin:0 12.50px;">gearbeitet</div>
<div class="t" style="left:595.3px;top:561.00px;font-size:13px;line-height:16px;color:#111;letter-spacing:0.24166666666666714px;transform:scaleY(1.08);transform-origin:0 12.50px;">Demo SysAdmin</div>
<div class="b" style="left:776px;top:557px;width:42px;height:21.5px;background:#f0f0f0;border:1px solid #c4c4c4;box-shadow:inset -1px -1px 0 #b0b0b0;"></div>
<div class="t" style="left:779.3px;top:560.50px;font-size:13px;line-height:16px;color:#000;letter-spacing:0.049999999999999524px;transform:scaleY(1.08);transform-origin:0 12.50px;">Memo</div>
<div class="b" style="left:828px;top:560px;width:16px;height:16px;background:#fff;border:1px solid #6f6f6f;"></div>
<svg class="b" style="left:828px;top:560px;" width="16" height="16" viewBox="0 0 16 16"><polyline points="3.2,8.2 6.8,11.6 12.0,4.3" fill="none" stroke="#000" stroke-width="2.2"/></svg>
<div class="t" style="left:1123.3px;top:561.00px;font-size:13px;line-height:16px;color:#111;letter-spacing:0.5250000000000004px;transform:scaleY(1.08);transform-origin:0 12.50px;">LS0500003</div>
<div class="b" style="left:1247px;top:559px;width:19px;height:18px;background:#efefef;border:1px solid #b6b6b6;box-shadow:inset -1px -1px 0 #c6c6c6, inset 1px 1px 0 #f6f6f6;"></div>
<svg class="b" style="left:1247px;top:559px;" width="19.0" height="18.0"><rect x="5.95" y="11.54" width="1.7" height="1.4" fill="#505050"/><rect x="8.65" y="11.54" width="1.7" height="1.4" fill="#505050"/><rect x="11.35" y="11.54" width="1.7" height="1.4" fill="#505050"/></svg>
<div class="b" style="left:95px;top:585px;width:1330px;height:28px;background:#e5e5e5;"></div>
<div class="b" style="left:0px;top:613px;width:1270px;height:35px;background:#e5e5e5;"></div>
<div class="t" style="left:1.9px;top:591.90px;font-size:13px;line-height:16px;color:#111;letter-spacing:-0.15000000000000036px;transform:scaleY(1.08);transform-origin:0 12.50px;">Mi</div>
<div class="b" style="left:99px;top:587px;width:156px;height:24.5px;background:#e4e4e4;border:1px solid #bdbdbd;"></div>
<svg class="b" style="left:236.2px;top:594px;" width="14.0" height="10.4"><path d="M0 0 L6.50 6.50 L13.00 0 L13.00 3.40 L6.50 9.40 L0 3.40 Z" fill="#6a6a6a"/></svg>
<div class="b" style="left:259px;top:590px;width:18px;height:18px;background:#efefef;border:1px solid #b6b6b6;box-shadow:inset -1px -1px 0 #c6c6c6, inset 1px 1px 0 #f6f6f6;"></div>
<svg class="b" style="left:259px;top:590px;" width="18.0" height="18.0"><rect x="5.45" y="11.54" width="1.7" height="1.4" fill="#505050"/><rect x="8.15" y="11.54" width="1.7" height="1.4" fill="#505050"/><rect x="10.85" y="11.54" width="1.7" height="1.4" fill="#505050"/></svg>
<div class="t" style="left:280.5px;top:591.90px;font-size:13px;line-height:16px;color:#111;letter-spacing:0.25999999999999945px;transform:scaleY(1.08);transform-origin:0 12.50px;">M00002</div>
<div class="b" style="left:351px;top:590px;width:19px;height:18px;background:#efefef;border:1px solid #b6b6b6;box-shadow:inset -1px -1px 0 #c6c6c6, inset 1px 1px 0 #f6f6f6;"></div>
<svg class="b" style="left:351px;top:590px;" width="19.0" height="18.0"><rect x="5.95" y="11.54" width="1.7" height="1.4" fill="#505050"/><rect x="8.65" y="11.54" width="1.7" height="1.4" fill="#505050"/><rect x="11.35" y="11.54" width="1.7" height="1.4" fill="#505050"/></svg>
<div class="b" style="left:378px;top:587px;width:70px;height:24.5px;background:#e4e4e4;border:1px solid #bdbdbd;"></div>
<div class="t" style="left:383px;top:591.90px;font-size:13px;line-height:16px;color:#a0a0a0;letter-spacing:0.12px;transform:scaleY(1.08);transform-origin:0 12.50px;text-shadow:0.8px 0.8px 0 #fbfbfb;">02.05.07</div>
<div class="b" style="left:452px;top:590px;width:19px;height:18px;background:#efefef;border:1px solid #b6b6b6;box-shadow:inset -1px -1px 0 #c6c6c6, inset 1px 1px 0 #f6f6f6;"></div>
<svg class="b" style="left:452px;top:590px;" width="19.0" height="18.0"><rect x="5.95" y="11.54" width="1.7" height="1.4" fill="#505050"/><rect x="8.65" y="11.54" width="1.7" height="1.4" fill="#505050"/><rect x="11.35" y="11.54" width="1.7" height="1.4" fill="#505050"/></svg>
<div class="b" style="left:478px;top:587px;width:88px;height:24.5px;background:#e4e4e4;border:1px solid #bdbdbd;"></div>
<div class="t" style="left:483px;top:591.90px;font-size:13px;line-height:16px;color:#a0a0a0;letter-spacing:0.12px;transform:scaleY(1.08);transform-origin:0 12.50px;text-shadow:0.8px 0.8px 0 #fbfbfb;">08:00:00</div>
<div class="b" style="left:570px;top:590px;width:19px;height:18px;background:#efefef;border:1px solid #b6b6b6;box-shadow:inset -1px -1px 0 #c6c6c6, inset 1px 1px 0 #f6f6f6;"></div>
<svg class="b" style="left:570px;top:590px;" width="19.0" height="18.0"><rect x="5.95" y="11.54" width="1.7" height="1.4" fill="#505050"/><rect x="8.65" y="11.54" width="1.7" height="1.4" fill="#505050"/><rect x="11.35" y="11.54" width="1.7" height="1.4" fill="#505050"/></svg>
<div class="b" style="left:596px;top:587px;width:87px;height:24.5px;background:#e4e4e4;border:1px solid #bdbdbd;"></div>
<div class="t" style="left:601px;top:591.90px;font-size:13px;line-height:16px;color:#a0a0a0;letter-spacing:0.12px;transform:scaleY(1.08);transform-origin:0 12.50px;text-shadow:0.8px 0.8px 0 #fbfbfb;">16:30:00</div>
<div class="b" style="left:687px;top:590px;width:19px;height:18px;background:#efefef;border:1px solid #b6b6b6;box-shadow:inset -1px -1px 0 #c6c6c6, inset 1px 1px 0 #f6f6f6;"></div>
<svg class="b" style="left:687px;top:590px;" width="19.0" height="18.0"><rect x="5.95" y="11.54" width="1.7" height="1.4" fill="#505050"/><rect x="8.65" y="11.54" width="1.7" height="1.4" fill="#505050"/><rect x="11.35" y="11.54" width="1.7" height="1.4" fill="#505050"/></svg>
<div class="b" style="left:714px;top:587px;width:59px;height:24.5px;background:#e4e4e4;border:1px solid #bdbdbd;"></div>
<div class="t" style="left:718px;top:591.90px;font-size:13px;line-height:16px;color:#a0a0a0;letter-spacing:0.12px;transform:scaleY(1.08);transform-origin:0 12.50px;text-shadow:0.8px 0.8px 0 #fbfbfb;">7,5</div>
<div class="t" style="left:776.2px;top:591.90px;font-size:13px;line-height:16px;color:#111;letter-spacing:0.12px;transform:scaleY(1.08);transform-origin:0 12.50px;">h</div>
<div class="b" style="left:823px;top:587px;width:240px;height:24.5px;background:#e4e4e4;border:1px solid #bdbdbd;"></div>
<div class="t" style="left:827px;top:591.90px;font-size:13px;line-height:16px;color:#a0a0a0;letter-spacing:0.12px;transform:scaleY(1.08);transform-origin:0 12.50px;text-shadow:0.8px 0.8px 0 #fbfbfb;">Anton S<span style="letter-spacing:1.45px">c</span>hneider - M00001 - <span style="letter-spacing:1.45px">s</span><span style="letter-spacing:1.45px">y</span><span style="letter-spacing:1.45px">s</span>admin</div>
<div class="b" style="left:1066px;top:590px;width:19px;height:18px;background:#efefef;border:1px solid #b6b6b6;box-shadow:inset -1px -1px 0 #c6c6c6, inset 1px 1px 0 #f6f6f6;"></div>
<svg class="b" style="left:1066px;top:590px;" width="19.0" height="18.0"><rect x="5.95" y="11.54" width="1.7" height="1.4" fill="#505050"/><rect x="8.65" y="11.54" width="1.7" height="1.4" fill="#505050"/><rect x="11.35" y="11.54" width="1.7" height="1.4" fill="#505050"/></svg>
<div class="b" style="left:1099px;top:589.5px;width:18px;height:18.5px;background:#f0f0f0;border:1px solid #b4b4b4;box-shadow:inset 0 0 0 1px #e8e8e8;"></div>
<svg class="b" style="left:1099px;top:589.5px;" width="18" height="18.5" viewBox="0 0 18 18.5"><path d="M4.9 4.5 L13.7 13.8 M13.7 4.5 L4.9 13.8" stroke="#000" stroke-width="2.5" stroke-linecap="round"/></svg>
<div class="b" style="left:1124px;top:587px;width:119px;height:24.5px;background:#e4e4e4;border:1px solid #bdbdbd;"></div>
<div class="t" style="left:1128px;top:591.90px;font-size:13px;line-height:16px;color:#a0a0a0;letter-spacing:0.12px;transform:scaleY(1.08);transform-origin:0 12.50px;text-shadow:0.8px 0.8px 0 #fbfbfb;">ni<span style="letter-spacing:1.45px">c</span>ht abre<span style="letter-spacing:1.45px">c</span>hnen</div>
<div class="b" style="left:1247px;top:590px;width:19px;height:18px;background:#efefef;border:1px solid #b6b6b6;box-shadow:inset -1px -1px 0 #c6c6c6, inset 1px 1px 0 #f6f6f6;"></div>
<svg class="b" style="left:1247px;top:590px;" width="19.0" height="18.0"><rect x="5.95" y="11.54" width="1.7" height="1.4" fill="#505050"/><rect x="8.65" y="11.54" width="1.7" height="1.4" fill="#505050"/><rect x="11.35" y="11.54" width="1.7" height="1.4" fill="#505050"/></svg>
<div class="b" style="left:1273px;top:587px;width:125px;height:24.5px;background:#e4e4e4;border:1px solid #bdbdbd;"></div>
<div class="b" style="left:1402px;top:589.5px;width:19px;height:18.5px;background:#f0f0f0;border:1px solid #b4b4b4;box-shadow:inset 0 0 0 1px #e8e8e8;"></div>
<svg class="b" style="left:1402px;top:589.5px;" width="19" height="18.5" viewBox="0 0 19 18.5"><path d="M4.9 4.5 L13.7 13.8 M13.7 4.5 L4.9 13.8" stroke="#000" stroke-width="2.5" stroke-linecap="round"/></svg>
<div class="t" style="left:2.15px;top:623.50px;font-size:13px;line-height:16px;color:#111;letter-spacing:0.19583333333333286px;transform:scaleY(1.08);transform-origin:0 12.50px;">keine Zulagen</div>
<div class="b" style="left:259px;top:622px;width:18px;height:18px;background:#efefef;border:1px solid #b6b6b6;box-shadow:inset -1px -1px 0 #c6c6c6, inset 1px 1px 0 #f6f6f6;"></div>
<svg class="b" style="left:259px;top:622px;" width="18.0" height="18.0"><rect x="5.45" y="11.54" width="1.7" height="1.4" fill="#505050"/><rect x="8.15" y="11.54" width="1.7" height="1.4" fill="#505050"/><rect x="10.85" y="11.54" width="1.7" height="1.4" fill="#505050"/></svg>
<div class="t" style="left:281.0px;top:614.50px;font-size:13px;line-height:16px;color:#111;letter-spacing:0.3022727272727275px;transform:scaleY(1.08);transform-origin:0 12.50px;">abgerechnet, nicht mehr</div>
<div class="t" style="left:281.0px;top:631.80px;font-size:13px;line-height:16px;color:#111;letter-spacing:0.5437500000000002px;transform:scaleY(1.08);transform-origin:0 12.50px;">änderbar.</div>
<div class="t" style="left:477.5px;top:623.50px;font-size:13px;line-height:16px;color:#111;letter-spacing:0.27222222222222253px;transform:scaleY(1.08);transform-origin:0 12.50px;">gearbeitet</div>
<div class="t" style="left:595.3px;top:623.50px;font-size:13px;line-height:16px;color:#111;letter-spacing:0.24166666666666714px;transform:scaleY(1.08);transform-origin:0 12.50px;">Demo SysAdmin</div>
<div class="b" style="left:776px;top:620px;width:42px;height:21.5px;background:#f0f0f0;border:1px solid #c4c4c4;box-shadow:inset -1px -1px 0 #b0b0b0;"></div>
<div class="t" style="left:779.3px;top:623.50px;font-size:13px;line-height:16px;color:#000;letter-spacing:0.049999999999999524px;transform:scaleY(1.08);transform-origin:0 12.50px;">Memo</div>
<div class="b" style="left:828px;top:623px;width:16px;height:16px;background:#fff;border:1px solid #6f6f6f;"></div>
<svg class="b" style="left:828px;top:623px;" width="16" height="16" viewBox="0 0 16 16"><polyline points="3.2,8.2 6.8,11.6 12.0,4.3" fill="none" stroke="#000" stroke-width="2.2"/></svg>
<div class="t" style="left:1123.3px;top:623.50px;font-size:13px;line-height:16px;color:#111;letter-spacing:0.49375000000000036px;transform:scaleY(1.08);transform-origin:0 12.50px;">LS0700004</div>
<div class="b" style="left:1247px;top:622px;width:19px;height:18px;background:#efefef;border:1px solid #b6b6b6;box-shadow:inset -1px -1px 0 #c6c6c6, inset 1px 1px 0 #f6f6f6;"></div>
<svg class="b" style="left:1247px;top:622px;" width="19.0" height="18.0"><rect x="5.95" y="11.54" width="1.7" height="1.4" fill="#505050"/><rect x="8.65" y="11.54" width="1.7" height="1.4" fill="#505050"/><rect x="11.35" y="11.54" width="1.7" height="1.4" fill="#505050"/></svg>
<div class="b" style="left:95px;top:648px;width:1330px;height:27px;background:#a9c4e6;"></div>
<div class="b" style="left:0px;top:675px;width:1270px;height:25px;background:#a9c4e6;"></div>
<div class="t" style="left:1.9px;top:654.50px;font-size:13px;line-height:16px;color:#111;letter-spacing:0.6500000000000004px;transform:scaleY(1.08);transform-origin:0 12.50px;">Do</div>
<div class="b" style="left:99px;top:649px;width:156px;height:24.5px;background:#fff;border:1px solid #6f6f6f;"></div>
<svg class="b" style="left:236.2px;top:656px;" width="14.0" height="10.4"><path d="M0 0 L6.50 6.50 L13.00 0 L13.00 3.40 L6.50 9.40 L0 3.40 Z" fill="#111"/></svg>
<div class="t" style="left:105px;top:654.50px;font-size:13px;line-height:16px;color:#000;letter-spacing:0.12px;transform:scaleY(1.08);transform-origin:0 12.50px;">Mitarbeiter</div>
<div class="b" style="left:259px;top:653px;width:18px;height:18px;background:#efefef;border:1px solid #b6b6b6;box-shadow:inset -1px -1px 0 #c6c6c6, inset 1px 1px 0 #f6f6f6;"></div>
<svg class="b" style="left:259px;top:653px;" width="18.0" height="18.0"><rect x="5.45" y="11.54" width="1.7" height="1.4" fill="#505050"/><rect x="8.15" y="11.54" width="1.7" height="1.4" fill="#505050"/><rect x="10.85" y="11.54" width="1.7" height="1.4" fill="#505050"/></svg>
<div class="t" style="left:280.5px;top:654.50px;font-size:13px;line-height:16px;color:#111;letter-spacing:0.25999999999999945px;transform:scaleY(1.08);transform-origin:0 12.50px;">M00002</div>
<div class="b" style="left:351px;top:653px;width:19px;height:18px;background:#efefef;border:1px solid #b6b6b6;box-shadow:inset -1px -1px 0 #c6c6c6, inset 1px 1px 0 #f6f6f6;"></div>
<svg class="b" style="left:351px;top:653px;" width="19.0" height="18.0"><rect x="5.95" y="11.54" width="1.7" height="1.4" fill="#505050"/><rect x="8.65" y="11.54" width="1.7" height="1.4" fill="#505050"/><rect x="11.35" y="11.54" width="1.7" height="1.4" fill="#505050"/></svg>
<div class="b" style="left:378px;top:649px;width:70px;height:24.5px;background:#fff;border:1px solid #6f6f6f;"></div>
<div class="t" style="left:383px;top:654.50px;font-size:13px;line-height:16px;color:#000;letter-spacing:0.12px;transform:scaleY(1.08);transform-origin:0 12.50px;">03.05.07</div>
<div class="b" style="left:452px;top:653px;width:19px;height:18px;background:#efefef;border:1px solid #b6b6b6;box-shadow:inset -1px -1px 0 #c6c6c6, inset 1px 1px 0 #f6f6f6;"></div>
<svg class="b" style="left:452px;top:653px;" width="19.0" height="18.0"><rect x="5.95" y="11.54" width="1.7" height="1.4" fill="#505050"/><rect x="8.65" y="11.54" width="1.7" height="1.4" fill="#505050"/><rect x="11.35" y="11.54" width="1.7" height="1.4" fill="#505050"/></svg>
<div class="b" style="left:478px;top:649px;width:88px;height:24.5px;background:#fff;border:1px solid #6f6f6f;"></div>
<div class="t" style="left:483px;top:654.50px;font-size:13px;line-height:16px;color:#000;letter-spacing:0.12px;transform:scaleY(1.08);transform-origin:0 12.50px;">08:00:00</div>
<div class="b" style="left:570px;top:653px;width:19px;height:18px;background:#efefef;border:1px solid #b6b6b6;box-shadow:inset -1px -1px 0 #c6c6c6, inset 1px 1px 0 #f6f6f6;"></div>
<svg class="b" style="left:570px;top:653px;" width="19.0" height="18.0"><rect x="5.95" y="11.54" width="1.7" height="1.4" fill="#505050"/><rect x="8.65" y="11.54" width="1.7" height="1.4" fill="#505050"/><rect x="11.35" y="11.54" width="1.7" height="1.4" fill="#505050"/></svg>
<div class="b" style="left:596px;top:649px;width:87px;height:24.5px;background:#fff;border:1px solid #6f6f6f;"></div>
<div class="t" style="left:601px;top:654.50px;font-size:13px;line-height:16px;color:#000;letter-spacing:0.12px;transform:scaleY(1.08);transform-origin:0 12.50px;">16:30:00</div>
<div class="b" style="left:687px;top:653px;width:19px;height:18px;background:#efefef;border:1px solid #b6b6b6;box-shadow:inset -1px -1px 0 #c6c6c6, inset 1px 1px 0 #f6f6f6;"></div>
<svg class="b" style="left:687px;top:653px;" width="19.0" height="18.0"><rect x="5.95" y="11.54" width="1.7" height="1.4" fill="#505050"/><rect x="8.65" y="11.54" width="1.7" height="1.4" fill="#505050"/><rect x="11.35" y="11.54" width="1.7" height="1.4" fill="#505050"/></svg>
<div class="b" style="left:714px;top:649px;width:59px;height:24.5px;background:#fff;border:1px solid #6f6f6f;"></div>
<div class="t" style="left:718px;top:654.50px;font-size:13px;line-height:16px;color:#000;letter-spacing:0.12px;transform:scaleY(1.08);transform-origin:0 12.50px;">7,5</div>
<div class="t" style="left:776.2px;top:654.50px;font-size:13px;line-height:16px;color:#111;letter-spacing:0.12px;transform:scaleY(1.08);transform-origin:0 12.50px;">h</div>
<div class="b" style="left:823px;top:649px;width:240px;height:24.5px;background:#fff;border:1px solid #6f6f6f;"></div>
<div class="t" style="left:827px;top:654.50px;font-size:13px;line-height:16px;color:#000;letter-spacing:0.12px;transform:scaleY(1.08);transform-origin:0 12.50px;">Anton S<span style="letter-spacing:1.45px">c</span>hneider - M00001 - <span style="letter-spacing:1.45px">s</span><span style="letter-spacing:1.45px">y</span><span style="letter-spacing:1.45px">s</span>admin</div>
<div class="b" style="left:1066px;top:653px;width:19px;height:18px;background:#efefef;border:1px solid #b6b6b6;box-shadow:inset -1px -1px 0 #c6c6c6, inset 1px 1px 0 #f6f6f6;"></div>
<svg class="b" style="left:1066px;top:653px;" width="19.0" height="18.0"><rect x="5.95" y="11.54" width="1.7" height="1.4" fill="#505050"/><rect x="8.65" y="11.54" width="1.7" height="1.4" fill="#505050"/><rect x="11.35" y="11.54" width="1.7" height="1.4" fill="#505050"/></svg>
<div class="b" style="left:1099px;top:652.5px;width:18px;height:18.5px;background:#f0f0f0;border:1px solid #b4b4b4;box-shadow:inset 0 0 0 1px #e8e8e8;"></div>
<svg class="b" style="left:1099px;top:652.5px;" width="18" height="18.5" viewBox="0 0 18 18.5"><path d="M4.9 4.5 L13.7 13.8 M13.7 4.5 L4.9 13.8" stroke="#000" stroke-width="2.5" stroke-linecap="round"/></svg>
<div class="b" style="left:1124px;top:649px;width:119px;height:24.5px;background:#fff;border:1px solid #6f6f6f;"></div>
<div class="t" style="left:1128px;top:654.50px;font-size:13px;line-height:16px;color:#000;letter-spacing:0.12px;transform:scaleY(1.08);transform-origin:0 12.50px;">ni<span style="letter-spacing:1.45px">c</span>ht abre<span style="letter-spacing:1.45px">c</span>hnen</div>
<div class="b" style="left:1247px;top:653px;width:19px;height:18px;background:#efefef;border:1px solid #b6b6b6;box-shadow:inset -1px -1px 0 #c6c6c6, inset 1px 1px 0 #f6f6f6;"></div>
<svg class="b" style="left:1247px;top:653px;" width="19.0" height="18.0"><rect x="5.95" y="11.54" width="1.7" height="1.4" fill="#505050"/><rect x="8.65" y="11.54" width="1.7" height="1.4" fill="#505050"/><rect x="11.35" y="11.54" width="1.7" height="1.4" fill="#505050"/></svg>
<div class="b" style="left:1273px;top:649px;width:125px;height:24.5px;background:#fff;border:1px solid #6f6f6f;"></div>
<div class="b" style="left:1402px;top:652.5px;width:19px;height:18.5px;background:#f0f0f0;border:1px solid #b4b4b4;box-shadow:inset 0 0 0 1px #e8e8e8;"></div>
<svg class="b" style="left:1402px;top:652.5px;" width="19" height="18.5" viewBox="0 0 19 18.5"><path d="M4.9 4.5 L13.7 13.8 M13.7 4.5 L4.9 13.8" stroke="#000" stroke-width="2.5" stroke-linecap="round"/></svg>
<div class="t" style="left:2.15px;top:681.10px;font-size:13px;line-height:16px;color:#111;letter-spacing:0.19583333333333286px;transform:scaleY(1.08);transform-origin:0 12.50px;">keine Zulagen</div>
<div class="b" style="left:259px;top:679.5px;width:18px;height:18.0px;background:#efefef;border:1px solid #b6b6b6;box-shadow:inset -1px -1px 0 #c6c6c6, inset 1px 1px 0 #f6f6f6;"></div>
<svg class="b" style="left:259px;top:679.5px;" width="18.0" height="18.0"><rect x="5.45" y="11.54" width="1.7" height="1.4" fill="#505050"/><rect x="8.15" y="11.54" width="1.7" height="1.4" fill="#505050"/><rect x="10.85" y="11.54" width="1.7" height="1.4" fill="#505050"/></svg>
<div class="t" style="left:281.1px;top:681.10px;font-size:13px;line-height:16px;color:#111;letter-spacing:0.20600000000000024px;transform:scaleY(1.08);transform-origin:0 12.50px;">Charlotte Michler, Neudorf</div>
<div class="t" style="left:477.5px;top:681.10px;font-size:13px;line-height:16px;color:#111;letter-spacing:0.27222222222222253px;transform:scaleY(1.08);transform-origin:0 12.50px;">gearbeitet</div>
<div class="t" style="left:595.3px;top:681.10px;font-size:13px;line-height:16px;color:#111;letter-spacing:0.24166666666666714px;transform:scaleY(1.08);transform-origin:0 12.50px;">Demo SysAdmin</div>
<div class="b" style="left:776.3px;top:677px;width:42.200000000000045px;height:21.200000000000045px;background:#f0f0f0;border:1px solid #c4c4c4;box-shadow:inset -1px -1px 0 #b0b0b0;"></div>
<div class="t" style="left:779.5999999999999px;top:680.50px;font-size:13px;line-height:16px;color:#000;letter-spacing:0.049999999999999524px;transform:scaleY(1.08);transform-origin:0 12.50px;">Memo</div>
<div class="b" style="left:828px;top:680.2px;width:16px;height:16.0px;background:#fff;border:1px solid #6f6f6f;"></div>
<div class="b" style="left:1247px;top:679.5px;width:19px;height:18.0px;background:#efefef;border:1px solid #b6b6b6;box-shadow:inset -1px -1px 0 #c6c6c6, inset 1px 1px 0 #f6f6f6;"></div>
<svg class="b" style="left:1247px;top:679.5px;" width="19.0" height="18.0"><rect x="5.95" y="11.54" width="1.7" height="1.4" fill="#505050"/><rect x="8.65" y="11.54" width="1.7" height="1.4" fill="#505050"/><rect x="11.35" y="11.54" width="1.7" height="1.4" fill="#505050"/></svg>
<div class="b" style="left:95px;top:700px;width:1330px;height:28px;background:#f3f3f3;"></div>
<div class="b" style="left:0px;top:728px;width:1270px;height:25px;background:#f3f3f3;"></div>
<div class="t" style="left:1.9px;top:706.70px;font-size:13px;line-height:16px;color:#111;letter-spacing:0.10000000000000142px;transform:scaleY(1.08);transform-origin:0 12.50px;">Mo</div>
<div class="b" style="left:99px;top:702px;width:156px;height:24.5px;background:#fff;border:1px solid #6f6f6f;"></div>
<svg class="b" style="left:236.2px;top:709px;" width="14.0" height="10.4"><path d="M0 0 L6.50 6.50 L13.00 0 L13.00 3.40 L6.50 9.40 L0 3.40 Z" fill="#111"/></svg>
<div class="t" style="left:105px;top:707.50px;font-size:13px;line-height:16px;color:#000;letter-spacing:0.12px;transform:scaleY(1.08);transform-origin:0 12.50px;">Mitarbeiter</div>
<div class="b" style="left:259px;top:705px;width:18px;height:18px;background:#efefef;border:1px solid #b6b6b6;box-shadow:inset -1px -1px 0 #c6c6c6, inset 1px 1px 0 #f6f6f6;"></div>
<svg class="b" style="left:259px;top:705px;" width="18.0" height="18.0"><rect x="5.45" y="11.54" width="1.7" height="1.4" fill="#505050"/><rect x="8.15" y="11.54" width="1.7" height="1.4" fill="#505050"/><rect x="10.85" y="11.54" width="1.7" height="1.4" fill="#505050"/></svg>
<div class="t" style="left:280.5px;top:706.70px;font-size:13px;line-height:16px;color:#111;letter-spacing:0.25999999999999945px;transform:scaleY(1.08);transform-origin:0 12.50px;">M00002</div>
<div class="b" style="left:351px;top:705px;width:19px;height:18px;background:#efefef;border:1px solid #b6b6b6;box-shadow:inset -1px -1px 0 #c6c6c6, inset 1px 1px 0 #f6f6f6;"></div>
<svg class="b" style="left:351px;top:705px;" width="19.0" height="18.0"><rect x="5.95" y="11.54" width="1.7" height="1.4" fill="#505050"/><rect x="8.65" y="11.54" width="1.7" height="1.4" fill="#505050"/><rect x="11.35" y="11.54" width="1.7" height="1.4" fill="#505050"/></svg>
<div class="b" style="left:378px;top:702px;width:70px;height:24.5px;background:#fff;border:1px solid #6f6f6f;"></div>
<div class="t" style="left:383px;top:706.70px;font-size:13px;line-height:16px;color:#000;letter-spacing:0.12px;transform:scaleY(1.08);transform-origin:0 12.50px;">14.05.07</div>
<div class="b" style="left:452px;top:705px;width:19px;height:18px;background:#efefef;border:1px solid #b6b6b6;box-shadow:inset -1px -1px 0 #c6c6c6, inset 1px 1px 0 #f6f6f6;"></div>
<svg class="b" style="left:452px;top:705px;" width="19.0" height="18.0"><rect x="5.95" y="11.54" width="1.7" height="1.4" fill="#505050"/><rect x="8.65" y="11.54" width="1.7" height="1.4" fill="#505050"/><rect x="11.35" y="11.54" width="1.7" height="1.4" fill="#505050"/></svg>
<div class="b" style="left:478px;top:702px;width:88px;height:24.5px;background:#fff;border:1px solid #6f6f6f;"></div>
<div class="t" style="left:483px;top:706.70px;font-size:13px;line-height:16px;color:#000;letter-spacing:0.12px;transform:scaleY(1.08);transform-origin:0 12.50px;">08:00:00</div>
<div class="b" style="left:570px;top:705px;width:19px;height:18px;background:#efefef;border:1px solid #b6b6b6;box-shadow:inset -1px -1px 0 #c6c6c6, inset 1px 1px 0 #f6f6f6;"></div>
<svg class="b" style="left:570px;top:705px;" width="19.0" height="18.0"><rect x="5.95" y="11.54" width="1.7" height="1.4" fill="#505050"/><rect x="8.65" y="11.54" width="1.7" height="1.4" fill="#505050"/><rect x="11.35" y="11.54" width="1.7" height="1.4" fill="#505050"/></svg>
<div class="b" style="left:596px;top:702px;width:87px;height:24.5px;background:#fff;border:1px solid #6f6f6f;"></div>
<div class="t" style="left:601px;top:706.70px;font-size:13px;line-height:16px;color:#000;letter-spacing:0.12px;transform:scaleY(1.08);transform-origin:0 12.50px;">16:00:00</div>
<div class="b" style="left:687px;top:705px;width:19px;height:18px;background:#efefef;border:1px solid #b6b6b6;box-shadow:inset -1px -1px 0 #c6c6c6, inset 1px 1px 0 #f6f6f6;"></div>
<svg class="b" style="left:687px;top:705px;" width="19.0" height="18.0"><rect x="5.95" y="11.54" width="1.7" height="1.4" fill="#505050"/><rect x="8.65" y="11.54" width="1.7" height="1.4" fill="#505050"/><rect x="11.35" y="11.54" width="1.7" height="1.4" fill="#505050"/></svg>
<div class="b" style="left:714px;top:702px;width:59px;height:24.5px;background:#fff;border:1px solid #6f6f6f;"></div>
<div class="t" style="left:718px;top:706.70px;font-size:13px;line-height:16px;color:#000;letter-spacing:0.12px;transform:scaleY(1.08);transform-origin:0 12.50px;">8</div>
<div class="t" style="left:776.2px;top:706.70px;font-size:13px;line-height:16px;color:#111;letter-spacing:0.12px;transform:scaleY(1.08);transform-origin:0 12.50px;">h</div>
<div class="b" style="left:823px;top:702px;width:240px;height:24.5px;background:#fff;border:1px solid #6f6f6f;"></div>
<div class="t" style="left:827px;top:706.70px;font-size:13px;line-height:16px;color:#000;letter-spacing:0.12px;transform:scaleY(1.08);transform-origin:0 12.50px;">Anton S<span style="letter-spacing:1.45px">c</span>hneider - M00001 - <span style="letter-spacing:1.45px">s</span><span style="letter-spacing:1.45px">y</span><span style="letter-spacing:1.45px">s</span>admin</div>
<div class="b" style="left:1066px;top:705px;width:19px;height:18px;background:#efefef;border:1px solid #b6b6b6;box-shadow:inset -1px -1px 0 #c6c6c6, inset 1px 1px 0 #f6f6f6;"></div>
<svg class="b" style="left:1066px;top:705px;" width="19.0" height="18.0"><rect x="5.95" y="11.54" width="1.7" height="1.4" fill="#505050"/><rect x="8.65" y="11.54" width="1.7" height="1.4" fill="#505050"/><rect x="11.35" y="11.54" width="1.7" height="1.4" fill="#505050"/></svg>
<div class="b" style="left:1099px;top:704.5px;width:18px;height:18.5px;background:#f0f0f0;border:1px solid #b4b4b4;box-shadow:inset 0 0 0 1px #e8e8e8;"></div>
<svg class="b" style="left:1099px;top:704.5px;" width="18" height="18.5" viewBox="0 0 18 18.5"><path d="M4.9 4.5 L13.7 13.8 M13.7 4.5 L4.9 13.8" stroke="#000" stroke-width="2.5" stroke-linecap="round"/></svg>
<div class="b" style="left:1124px;top:702px;width:119px;height:24.5px;background:#fff;border:1px solid #6f6f6f;"></div>
<div class="t" style="left:1128px;top:706.70px;font-size:13px;line-height:16px;color:#000;letter-spacing:0.12px;transform:scaleY(1.08);transform-origin:0 12.50px;">ni<span style="letter-spacing:1.45px">c</span>ht abre<span style="letter-spacing:1.45px">c</span>hnen</div>
<div class="b" style="left:1247px;top:705px;width:19px;height:18px;background:#efefef;border:1px solid #b6b6b6;box-shadow:inset -1px -1px 0 #c6c6c6, inset 1px 1px 0 #f6f6f6;"></div>
<svg class="b" style="left:1247px;top:705px;" width="19.0" height="18.0"><rect x="5.95" y="11.54" width="1.7" height="1.4" fill="#505050"/><rect x="8.65" y="11.54" width="1.7" height="1.4" fill="#505050"/><rect x="11.35" y="11.54" width="1.7" height="1.4" fill="#505050"/></svg>
<div class="b" style="left:1273px;top:702px;width:125px;height:24.5px;background:#fff;border:1px solid #6f6f6f;"></div>
<div class="b" style="left:1402px;top:704.5px;width:19px;height:18.5px;background:#f0f0f0;border:1px solid #b4b4b4;box-shadow:inset 0 0 0 1px #e8e8e8;"></div>
<svg class="b" style="left:1402px;top:704.5px;" width="19" height="18.5" viewBox="0 0 19 18.5"><path d="M4.9 4.5 L13.7 13.8 M13.7 4.5 L4.9 13.8" stroke="#000" stroke-width="2.5" stroke-linecap="round"/></svg>
<div class="t" style="left:2.15px;top:733.10px;font-size:13px;line-height:16px;color:#111;letter-spacing:0.19583333333333286px;transform:scaleY(1.08);transform-origin:0 12.50px;">keine Zulagen</div>
<div class="b" style="left:259px;top:731.5px;width:18px;height:18.0px;background:#efefef;border:1px solid #b6b6b6;box-shadow:inset -1px -1px 0 #c6c6c6, inset 1px 1px 0 #f6f6f6;"></div>
<svg class="b" style="left:259px;top:731.5px;" width="18.0" height="18.0"><rect x="5.45" y="11.54" width="1.7" height="1.4" fill="#505050"/><rect x="8.15" y="11.54" width="1.7" height="1.4" fill="#505050"/><rect x="10.85" y="11.54" width="1.7" height="1.4" fill="#505050"/></svg>
<div class="t" style="left:281.1px;top:733.10px;font-size:13px;line-height:16px;color:#111;letter-spacing:0.20600000000000024px;transform:scaleY(1.08);transform-origin:0 12.50px;">Charlotte Michler, Neudorf</div>
<div class="t" style="left:477.5px;top:733.10px;font-size:13px;line-height:16px;color:#111;letter-spacing:0.27222222222222253px;transform:scaleY(1.08);transform-origin:0 12.50px;">gearbeitet</div>
<div class="t" style="left:595.3px;top:733.10px;font-size:13px;line-height:16px;color:#111;letter-spacing:0.24166666666666714px;transform:scaleY(1.08);transform-origin:0 12.50px;">Demo SysAdmin</div>
<div class="b" style="left:776.3px;top:729.4px;width:42.200000000000045px;height:21.200000000000045px;background:#f0f0f0;border:1px solid #c4c4c4;box-shadow:inset -1px -1px 0 #b0b0b0;"></div>
<div class="t" style="left:779.5999999999999px;top:732.90px;font-size:13px;line-height:16px;color:#000;letter-spacing:0.049999999999999524px;transform:scaleY(1.08);transform-origin:0 12.50px;">Memo</div>
<div class="b" style="left:828px;top:733.2px;width:16px;height:16.0px;background:#fff;border:1px solid #6f6f6f;"></div>
<div class="b" style="left:1247px;top:731.5px;width:19px;height:18.0px;background:#efefef;border:1px solid #b6b6b6;box-shadow:inset -1px -1px 0 #c6c6c6, inset 1px 1px 0 #f6f6f6;"></div>
<svg class="b" style="left:1247px;top:731.5px;" width="19.0" height="18.0"><rect x="5.95" y="11.54" width="1.7" height="1.4" fill="#505050"/><rect x="8.65" y="11.54" width="1.7" height="1.4" fill="#505050"/><rect x="11.35" y="11.54" width="1.7" height="1.4" fill="#505050"/></svg>
<div class="t" style="left:63px;top:789.00px;font-size:13px;line-height:16px;color:#222;letter-spacing:0.12px;transform:scaleY(1.08);transform-origin:0 12.50px;">Daten<span style="letter-spacing:1.45px">s</span>ät<span style="letter-spacing:1.45px">z</span>e 1 - 4 <span style="letter-spacing:1.45px">v</span>on 4</div>
<div class="b" style="left:1322px;top:788px;width:23px;height:16px;background:#dedede;border:1px solid #c9c9c9;"></div>
<div class="b" style="left:1347px;top:788px;width:23px;height:16px;background:#dedede;border:1px solid #c9c9c9;"></div>
<div class="b" style="left:1372px;top:788px;width:23px;height:16px;background:#dedede;border:1px solid #c9c9c9;"></div>
<div class="b" style="left:1397px;top:788px;width:23px;height:16px;background:#dedede;border:1px solid #c9c9c9;"></div>
<div class="b" style="left:1422px;top:788px;width:23px;height:16px;background:#dedede;border:1px solid #c9c9c9;"></div>
<svg class="b" style="left:1322px;top:788px;" width="23" height="16"><rect x="4.8" y="4" width="2.7" height="8.4" fill="#3c3c3c"/><path d="M10.4 8.2 L15 3.9 L15 12.5 Z" fill="#3c3c3c"/></svg>
<svg class="b" style="left:1347px;top:788px;" width="23" height="16"><path d="M7.7 8.2 L12.6 3.9 L12.6 12.5 Z" fill="#c2c2c2"/><rect x="12.6" y="3.9" width="1.6" height="8.6" fill="#fafafa"/></svg>
<svg class="b" style="left:1372px;top:788px;" width="23" height="16"><rect x="5.4" y="10.9" width="1.8" height="1.8" fill="#555"/><rect x="10" y="10.9" width="1.8" height="1.8" fill="#555"/><rect x="14.2" y="10.9" width="1.8" height="1.8" fill="#555"/></svg>
<svg class="b" style="left:1397px;top:788px;" width="23" height="16"><path d="M13.5 8.2 L8.2 3.9 L8.2 12.5 Z" fill="#c2c2c2"/><path d="M13.5 8.2 L8.6 12.6" stroke="#fafafa" stroke-width="1"/></svg>
<svg class="b" style="left:1422px;top:788px;" width="23" height="16"><path d="M10.2 8.2 L5.3 3.9 L5.3 12.5 Z" fill="#3c3c3c"/><rect x="12.8" y="4" width="2.7" height="8.4" fill="#3c3c3c"/></svg>
<div class="b" style="left:0px;top:808.5px;width:1446px;height:1.5px;background:#a0a0a0;"></div>
<div class="b" style="left:1239px;top:813px;width:99px;height:23px;background:#efefef;border:1px solid #b9b9b9;box-shadow:inset 0 0 0 1px #dcdcdc;"></div>
<div class="t" style="left:1248.5px;top:816.50px;font-size:13px;line-height:16px;color:#111;letter-spacing:0.12px;transform:scaleY(1.08);transform-origin:0 12.50px;">Neuer Eintrag</div>
<div class="b" style="left:1343.5px;top:813px;width:100.0px;height:23px;background:#efefef;border:1px solid #b9b9b9;box-shadow:inset 0 0 0 1px #dcdcdc;"></div>
<div class="t" style="left:1363.5px;top:816.50px;font-size:13px;line-height:16px;color:#111;letter-spacing:0.12px;transform:scaleY(1.08);transform-origin:0 12.50px;">S<span style="letter-spacing:1.45px">c</span>hließen</div>
</div></body></html>
